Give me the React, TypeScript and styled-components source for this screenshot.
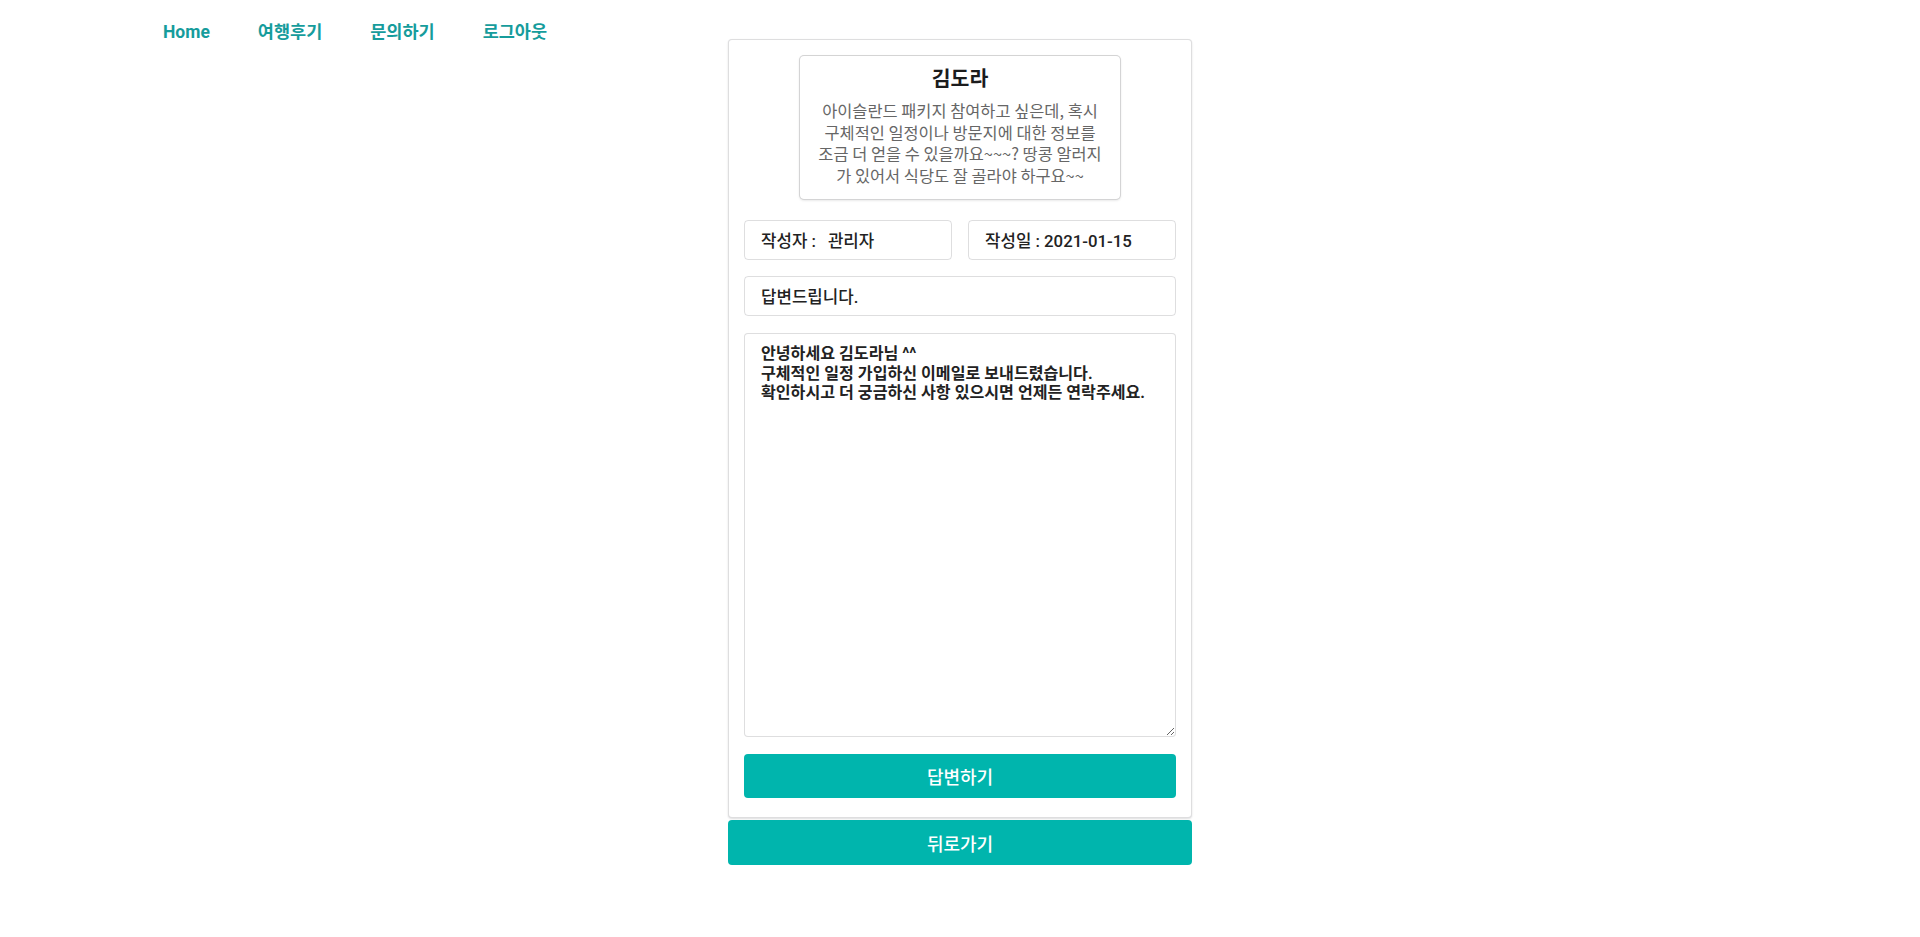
import * as React from 'react'
import styled, { createGlobalStyle } from 'styled-components'

const TEAL = '#00b5ad'
const FIELD_BORDER = 'rgba(34, 36, 38, 0.15)'

const GlobalStyle = createGlobalStyle`
  html, body {
    margin: 0;
    padding: 0;
    background: #ffffff;
    font-family: Roboto, 'Noto Sans CJK KR', sans-serif;
    color: #222222;
  }
`

const Page = styled.div`
  display: grid;
  grid-template-columns: 1fr 464px 1fr;
  align-items: start;
  min-height: 937px;
`

const Nav = styled.nav`
  display: flex;
  gap: 48px;
  padding: 19px 0 0 163px;
`

const NavLink = styled.a`
  font-size: 17.5px;
  font-weight: 700;
  line-height: 26px;
  color: #169c9c;
  text-decoration: none;
  cursor: pointer;
  white-space: nowrap;
`

const Column = styled.div`
  display: flex;
  flex-direction: column;
  gap: 2px;
  padding-top: 39px;
`

const Segment = styled.div`
  display: flex;
  flex-direction: column;
  border: 1px solid ${FIELD_BORDER};
  border-radius: 4px;
  box-shadow: 0 1px 2px 0 rgba(34, 36, 38, 0.15);
  padding: 16px 15px 19px;
  background: #fff;
`

const Profile = styled.div`
  width: 320px;
  box-sizing: border-box;
  align-self: center;
  border-radius: 4px;
  box-shadow: 0 1px 3px 0 #d4d4d5, 0 0 0 1px #d4d4d5;
  padding: 10px 16px 13px;
  text-align: center;
`

const Name = styled.h3`
  margin: 0 0 7px;
  font-size: 20.5px;
  font-weight: 700;
  line-height: 27px;
  color: #1b1c1d;
`

const Description = styled.p`
  margin: 0;
  font-family: 'Noto Sans CJK KR', sans-serif;
  font-size: 16.4px;
  line-height: 21.5px;
  color: #666666;
`

const FieldRow = styled.div`
  display: grid;
  grid-template-columns: 1fr 1fr;
  gap: 16px;
  margin-top: 21px;
`

const Field = styled.div<{ gapTop?: number }>`
  display: flex;
  align-items: center;
  height: 40px;
  box-sizing: border-box;
  margin-top: ${({ gapTop }) => gapTop ?? 0}px;
  padding: 0 16px;
  border: 1px solid ${FIELD_BORDER};
  border-radius: 4px;
  font-size: 16.8px;
  font-weight: 500;
  color: #222222;
  white-space: nowrap;
`

const Label = styled.span`
  margin-right: 12px;
`

const Content = styled.textarea`
  display: block;
  height: 404px;
  margin-top: 17px;
  box-sizing: border-box;
  padding: 10px 16px;
  border: 1px solid ${FIELD_BORDER};
  border-radius: 4px;
  font-family: Roboto, 'Noto Sans CJK KR', sans-serif;
  font-size: 16.1px;
  font-weight: 700;
  line-height: 19.5px;
  color: #222222;
  outline: none;
`

const Button = styled.button<{ gapTop?: number; tall?: boolean }>`
  display: block;
  width: 100%;
  height: ${({ tall }) => (tall ? 45 : 44)}px;
  margin-top: ${({ gapTop }) => gapTop ?? 0}px;
  border: none;
  border-radius: 4px;
  background: ${TEAL};
  color: #ffffff;
  font-family: Roboto, 'Noto Sans CJK KR', sans-serif;
  font-size: 18px;
  font-weight: 500;
  cursor: pointer;
`

const App: React.FC = () => {
  return (
    <>
      <GlobalStyle />
      <Page>
        <Nav>
          <NavLink>Home</NavLink>
          <NavLink>여행후기</NavLink>
          <NavLink>문의하기</NavLink>
          <NavLink>로그아웃</NavLink>
        </Nav>
        <Column>
          <Segment>
            <Profile>
              <Name>김도라</Name>
              <Description>
                아이슬란드 패키지 참여하고 싶은데, 혹시 구체적인 일정이나 방문지에 대한 정보를 조금 더 얻을 수 있을까요~~~? 땅콩 알러지가 있어서 식당도 잘 골라야 하구요~~
              </Description>
            </Profile>
            <FieldRow>
              <Field>
                <Label>작성자 :</Label>관리자
              </Field>
              <Field>작성일 : 2021-01-15</Field>
            </FieldRow>
            <Field gapTop={16}>답변드립니다.</Field>
            <Content
              defaultValue={
                '안녕하세요 김도라님 ^^\n구체적인 일정 가입하신 이메일로 보내드렸습니다.\n확인하시고 더 궁금하신 사항 있으시면 언제든 연락주세요.'
              }
            />
            <Button gapTop={17}>답변하기</Button>
          </Segment>
          <Button tall>뒤로가기</Button>
        </Column>
      </Page>
    </>
  )
}

export default App
